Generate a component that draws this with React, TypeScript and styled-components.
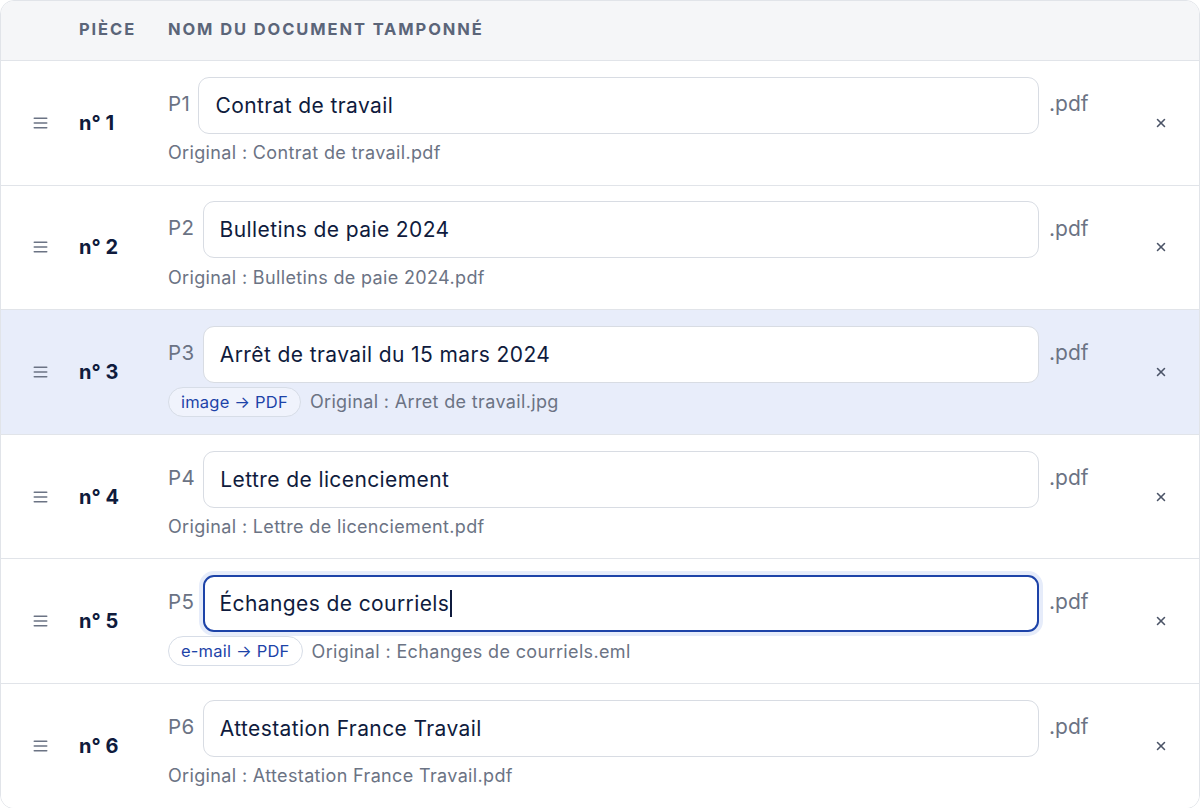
import styled, { createGlobalStyle } from 'styled-components';
import { X } from 'lucide-react';

const GlobalStyle = createGlobalStyle`
  html, body {
    margin: 0;
    padding: 0;
    background: #ffffff;
  }
  body {
    font-family: Inter, "Noto Sans", sans-serif;
  }
`;

type Piece = {
  num: number;
  name: string;
  original: string;
  badge?: string;
  selected?: boolean;
  focused?: boolean;
};

const pieces: Piece[] = [
  { num: 1, name: 'Contrat de travail', original: 'Contrat de travail.pdf' },
  { num: 2, name: 'Bulletins de paie 2024', original: 'Bulletins de paie 2024.pdf' },
  {
    num: 3,
    name: 'Arrêt de travail du 15 mars 2024',
    original: 'Arret de travail.jpg',
    badge: 'image → PDF',
    selected: true,
  },
  { num: 4, name: 'Lettre de licenciement', original: 'Lettre de licenciement.pdf' },
  {
    num: 5,
    name: 'Échanges de courriels',
    original: 'Echanges de courriels.eml',
    badge: 'e-mail → PDF',
    focused: true,
  },
  { num: 6, name: 'Attestation France Travail', original: 'Attestation France Travail.pdf' },
];

const DragHandle = () => (
  <svg width="15" height="12" viewBox="0 0 15 12">
    <rect x="0.5" y="0.5" width="14" height="1.6" rx="0.8" fill="currentColor" />
    <rect x="0.5" y="5.2" width="14" height="1.6" rx="0.8" fill="currentColor" />
    <rect x="0.5" y="9.9" width="14" height="1.6" rx="0.8" fill="currentColor" />
  </svg>
);

const App = () => {
  return (
    <>
      <GlobalStyle />
      <Table>
        <HeaderRow>
          <span />
          <HeaderCell>Pièce</HeaderCell>
          <HeaderCell>Nom du document tamponné</HeaderCell>
          <span />
          <span />
        </HeaderRow>
        {pieces.map((p) => (
          <Row key={p.num} $selected={p.selected}>
            <Handle>
              <DragHandle />
            </Handle>
            <Num>n° {p.num}</Num>
            <Content>
              <FieldLine>
                <PLabel>P{p.num}</PLabel>
                <Field $focused={p.focused}>
                  {p.name}
                  {p.focused && <Caret />}
                </Field>
              </FieldLine>
              <Meta>
                {p.badge && <Badge>{p.badge}</Badge>}
                <Original>Original : {p.original}</Original>
              </Meta>
            </Content>
            <Ext>.pdf</Ext>
            <Remove aria-label="Retirer">
              <X size={14} strokeWidth={2.6} />
            </Remove>
          </Row>
        ))}
      </Table>
    </>
  );
};

export default App;

const columns = `78px 89px 1fr 81px 79px`;

const Table = styled.div`
  width: 1200px;
  box-sizing: border-box;
  border: 1px solid #e1e4e9;
  border-radius: 14px;
  overflow: hidden;
  background: #ffffff;
`;

const HeaderRow = styled.div`
  display: grid;
  grid-template-columns: ${columns};
  align-items: center;
  box-sizing: border-box;
  height: 59px;
  padding-bottom: 3px;
  background: #f5f6f8;
`;

const HeaderCell = styled.div`
  font-size: 16.5px;
  font-weight: 700;
  letter-spacing: 1.9px;
  text-transform: uppercase;
  color: #5b6579;
  white-space: nowrap;
`;

const Row = styled.div<{ $selected?: boolean }>`
  display: grid;
  grid-template-columns: ${columns};
  align-items: center;
  box-sizing: border-box;
  height: 124.6px;
  border-top: 1px solid #e1e4e9;
  background: ${(p) => (p.$selected ? '#e8edfa' : '#ffffff')};
`;

const Handle = styled.div`
  display: flex;
  justify-content: center;
  color: #6b7384;
`;

const Num = styled.div`
  font-size: 20px;
  font-weight: 700;
  color: #0f1b3d;
  white-space: nowrap;
`;

const Content = styled.div`
  display: flex;
  flex-direction: column;
  gap: 4px;
  padding-bottom: 1px;
`;

const FieldLine = styled.div`
  display: flex;
  align-items: center;
  gap: 8px;
`;

const PLabel = styled.span`
  font-size: 20.5px;
  letter-spacing: 0.5px;
  color: #6b7384;
  align-self: flex-start;
  padding-top: 14px;
`;

const Field = styled.div<{ $focused?: boolean }>`
  flex: 1;
  display: flex;
  align-items: center;
  box-sizing: border-box;
  height: 57px;
  padding: 0 ${(p) => (p.$focused ? '15px' : '16px')};
  border: ${(p) => (p.$focused ? '2px solid #1d43a8' : '1px solid #d8dce3')};
  border-radius: 11px;
  box-shadow: ${(p) => (p.$focused ? '0 0 0 4px #e6ecfa' : 'none')};
  background: #ffffff;
  font-size: 21px;
  letter-spacing: 0.4px;
  color: #0f1b3d;
  white-space: nowrap;
`;

const Caret = styled.span`
  display: inline-block;
  width: 1.5px;
  height: 27px;
  margin-left: 1px;
  background: #0f1b3d;
`;

const Meta = styled.div`
  display: flex;
  align-items: center;
  gap: 9px;
  min-height: 30px;
`;

const Badge = styled.span`
  display: inline-flex;
  align-items: center;
  height: 30px;
  box-sizing: border-box;
  padding: 0 12px;
  border: 1px solid #d7dde7;
  border-radius: 15px;
  background: rgba(255, 255, 255, 0.35);
  font-size: 16.5px;
  letter-spacing: 0.2px;
  color: #1d43a8;
`;

const Original = styled.span`
  font-size: 18px;
  letter-spacing: 0.35px;
  color: #6b7384;
`;

const Ext = styled.div`
  align-self: start;
  padding: 30px 0 0 10px;
  font-size: 21px;
  color: #6b7384;
`;

const Remove = styled.button`
  justify-self: center;
  display: flex;
  align-items: center;
  justify-content: center;
  border: none;
  background: transparent;
  padding: 4px;
  margin-left: 2px;
  color: #4b5467;
  cursor: pointer;
`;
